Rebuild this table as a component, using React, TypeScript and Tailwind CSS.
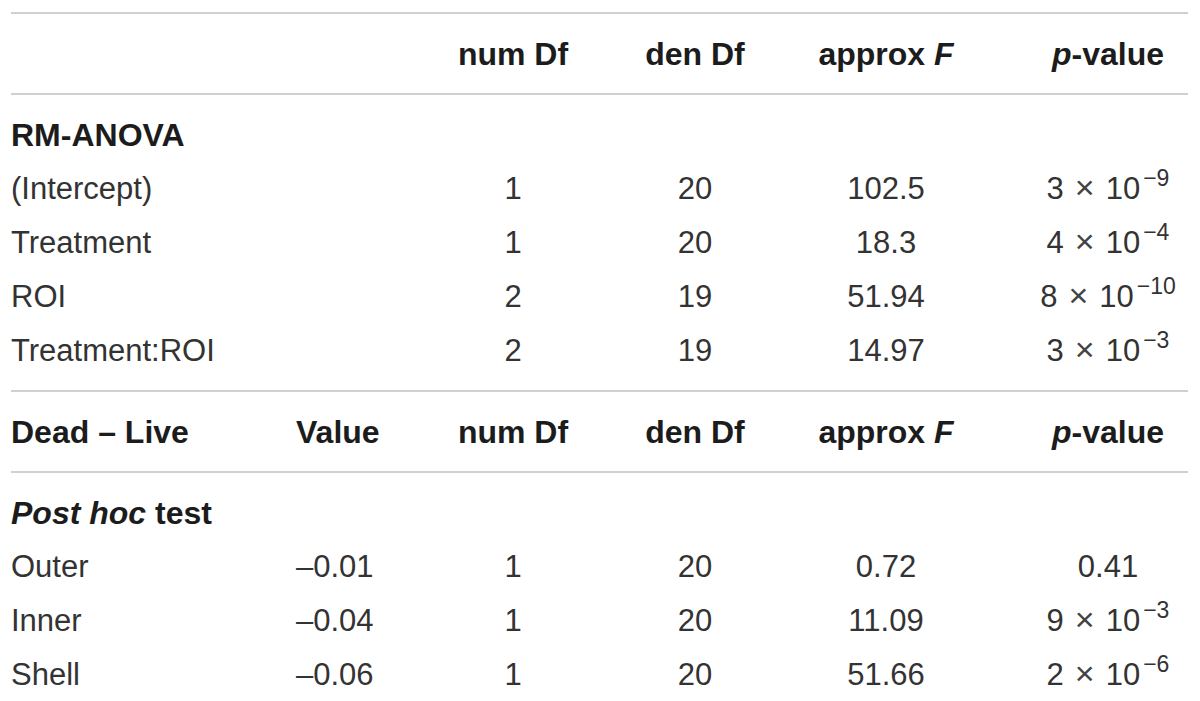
import * as React from "react";

type Row = {
  label: React.ReactNode;
  value?: string;
  num: string;
  den: string;
  f: string;
  p: React.ReactNode;
};

// scientific notation like "3 × 10⁻⁹"
const Exp = ({ base, exp }: { base: string; exp: string }) => (
  <span className="whitespace-nowrap">
    {base}
    <span className="mx-[11px] text-[34px] leading-none text-[#444]">×</span>
    10
    <span className="relative top-[-13px] ml-[3px] text-[23px] leading-none">−{exp}</span>
  </span>
);

const anovaRows: Row[] = [
  { label: "(Intercept)", num: "1", den: "20", f: "102.5", p: <Exp base="3" exp="9" /> },
  { label: "Treatment", num: "1", den: "20", f: "18.3", p: <Exp base="4" exp="4" /> },
  { label: "ROI", num: "2", den: "19", f: "51.94", p: <Exp base="8" exp="10" /> },
  { label: "Treatment:ROI", num: "2", den: "19", f: "14.97", p: <Exp base="3" exp="3" /> },
];

const postHocRows: Row[] = [
  { label: "Outer", value: "–0.01", num: "1", den: "20", f: "0.72", p: "0.41" },
  { label: "Inner", value: "–0.04", num: "1", den: "20", f: "11.09", p: <Exp base="9" exp="3" /> },
  { label: "Shell", value: "–0.06", num: "1", den: "20", f: "51.66", p: <Exp base="2" exp="6" /> },
];

const grid =
  "grid grid-cols-[285px_134px_166px_198px_184px_210px] h-[54px] items-center";

const HeaderRow = ({ first, value }: { first?: string; value?: string }) => (
  <div className={`${grid} font-bold text-[32px] text-[#1c1c1c]`}>
    <div>{first}</div>
    <div>{value}</div>
    <div className="text-center">num Df</div>
    <div className="text-center">den Df</div>
    <div className="text-center">
      approx <i>F</i>
    </div>
    <div className="text-center pl-[50px]">
      <i>p</i>-value
    </div>
  </div>
);

const DataRow = ({ row }: { row: Row }) => (
  <div className={`${grid} text-[31px] leading-[54px] text-[#333]`}>
    <div>{row.label}</div>
    <div>{row.value}</div>
    <div className="text-center">{row.num}</div>
    <div className="text-center">{row.den}</div>
    <div className="text-center">{row.f}</div>
    <div className="text-center pl-[50px]">{row.p}</div>
  </div>
);

const Section = ({ children }: { children: React.ReactNode }) => (
  <div className="border-t-2 border-[#d0d0d0] pt-[13px] pb-[12px]">{children}</div>
);

export default function App() {
  return (
    <div
      className="bg-white w-[1200px] h-[701px] overflow-hidden pt-[12px]"
      style={{ fontFamily: '"Liberation Sans", Arial, sans-serif' }}
    >
      <div className="ml-[11px] w-[1177px]">
        <Section>
          <HeaderRow />
        </Section>
        <Section>
          <div className={`${grid} font-bold text-[32px] text-[#1c1c1c]`}>
            <div className="col-span-2">RM-ANOVA</div>
          </div>
          {anovaRows.map((r, i) => (
            <DataRow key={i} row={r} />
          ))}
        </Section>
        <Section>
          <HeaderRow first="Dead – Live" value="Value" />
        </Section>
        <Section>
          <div className={`${grid} font-bold text-[32px] text-[#1c1c1c]`}>
            <div className="col-span-2">
              <i>Post hoc</i> test
            </div>
          </div>
          {postHocRows.map((r, i) => (
            <DataRow key={i} row={r} />
          ))}
        </Section>
      </div>
    </div>
  );
}
